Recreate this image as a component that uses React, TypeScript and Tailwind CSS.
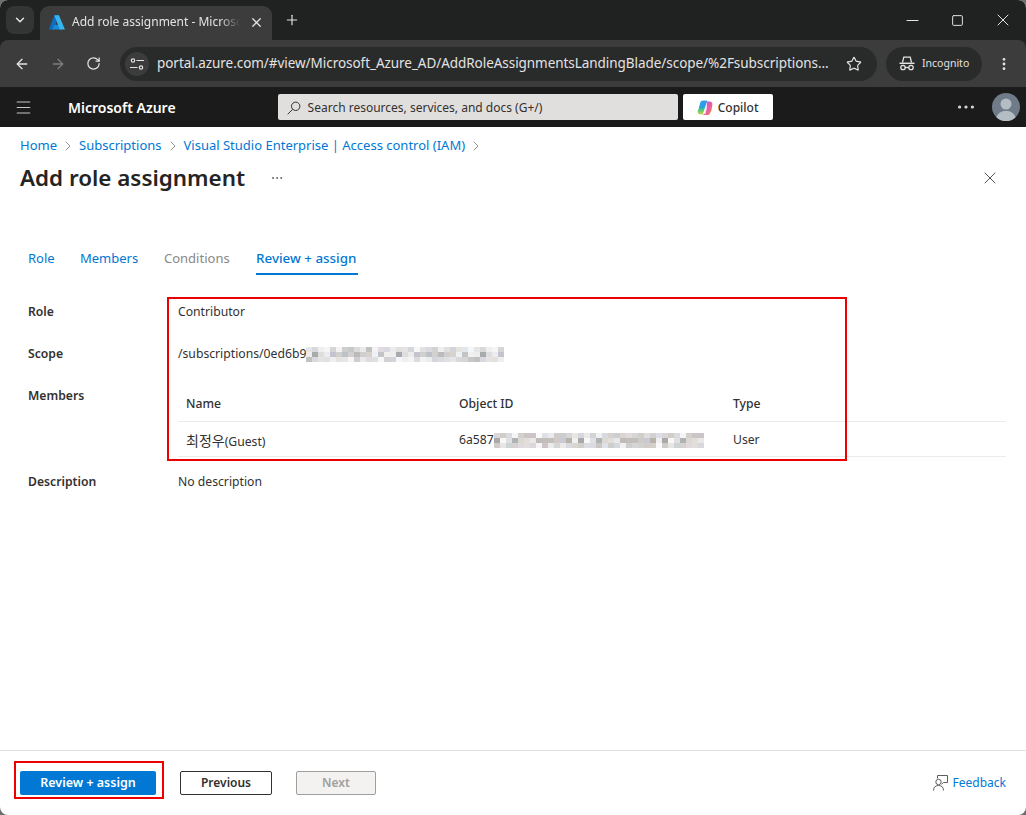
import React from 'react';
import { ArrowLeft, ArrowRight, ChevronDown, ChevronRight, Ellipsis, EllipsisVertical, Menu, Minus, Plus, RotateCw, Square, Star, X } from 'lucide-react';

const FONT = 'font-["Noto_Sans","Noto_Sans_CJK_KR",sans-serif]';

// pixelated (redacted) ids
const SCOPE_BLUR = ['#d8d8da','#c4c3c6','#e6e6e6','#f0f0f0','#c0bec0','#efeded','#b0b3b6','#a8abab','#c8c8c8','#dedede','#a0a0a0','#ececec','#cfc8d4','#c6c3d0','#e0e3e3','#cfcfcf','#dcd4d4','#bcc2c8','#f2f2f2','#d2cfcf','#c8c8ce','#bcbaba','#e6e6e6','#cfcfcf','#bcbcc6','#d8d2cc','#d4dae0','#eef2f6'];
const OBJECT_BLUR = ['#c4c2c4','#b8b2aa','#c6c6ce','#f0f0f0','#bcb6b0','#aca8a8','#b2a4ae','#f8f8f8','#ced0dc','#e0e0e4','#b8b0b0','#b0b3b3','#c0c0c0','#dcd8d2','#bec4ce','#e2dfda','#b6bec0','#e8e8e8','#c2c8ce','#c0baba','#b6b4b4','#c4beb8','#d0c6ce','#c2bfbf','#b6b6b0','#d0cbc6','#bababa','#cacad6'];

function Blur({ cells, count }: { cells: string[]; count: number }) {
  return (
    <span className="inline-flex flex-col">
      {[0, 1, 2].map(row => (
        <span key={row} className="flex">
          {Array.from({ length: count }, (_, i) => (
            <span
              key={i}
              className="h-[5px] w-[6px]"
              style={{ backgroundColor: cells[(i * (row + 1) + row * 5) % cells.length], opacity: row === 1 ? 1 : 0.65 }}
            />
          ))}
        </span>
      ))}
    </span>
  );
}

function AzureLogo() {
  return (
    <svg width="16" height="15" viewBox="0 0 16 15">
      <path d="M5.3 0.3h4.4L5 14.4H.5a.4.4 0 0 1-.4-.5z" fill="#0a6fc2" />
      <path d="M11.9 9.8H5.2l-2 4.6h9.9z" fill="#1a8ad8" />
      <path d="M5.3 0.3h4.6l5.9 13.6a.4.4 0 0 1-.4.5h-4.6z" fill="#37b4ee" />
    </svg>
  );
}

function CopilotLogo() {
  return (
    <svg width="16" height="16" viewBox="0 0 16 16">
      <defs>
        <linearGradient id="cpa" x1="0" y1="0" x2="0" y2="1">
          <stop offset="0" stopColor="#1f9fe8" />
          <stop offset="0.6" stopColor="#35c48c" />
          <stop offset="1" stopColor="#d8d048" />
        </linearGradient>
        <linearGradient id="cpb" x1="0" y1="0" x2="1" y2="1">
          <stop offset="0" stopColor="#9a5ce8" />
          <stop offset="0.6" stopColor="#ee5f9a" />
          <stop offset="1" stopColor="#f58a3c" />
        </linearGradient>
      </defs>
      <path d="M5.500.800h4.700L6.800 12.500c-.4 1.300-1.300 2-2.500 2H3.500C1.500 14.500.300 13 .600 11z" fill="url(#cpa)" />
      <path d="M5.500.800h4.700L7.500 8H1.800l1.400-5c.3-1.400 1-2.200 2.300-2.200z" fill="#2a9fe6" />
      <path d="M9.700 1.500h2.800c2 0 3.200 1.500 2.900 3.500l-1 5.500-1.500 3c-.5 1-1.300 1.500-2.500 1.500H5.600c1.200-.4 1.900-1.200 2.200-2.400z" fill="url(#cpb)" />
      <path d="M6.200 12.800 8.600 6l.6-1.700 1-2.800-.5 7.500-1.500 5.500z" fill="#ffffff" opacity="0.85" />
    </svg>
  );
}

function IncognitoIcon() {
  return (
    <svg width="16" height="15" viewBox="0 0 16 15" fill="none" stroke="#e3e3e3" strokeWidth="1.300">
      <path d="M3.500 6.500 4.800 1.200h6.400l1.300 5.300" />
      <path d="M.5 7.300h15" strokeWidth="1.500" />
      <circle cx="4" cy="11.500" r="2.200" />
      <circle cx="12" cy="11.500" r="2.200" />
      <path d="M6.200 11.500h3.600" />
    </svg>
  );
}

function TuneIcon() {
  return (
    <svg width="14" height="12" viewBox="0 0 14 12" fill="none" stroke="#e3e3e3" strokeWidth="1.200">
      <circle cx="3" cy="2.500" r="1.700" />
      <path d="M6.500 2.500H14" />
      <circle cx="11" cy="9.500" r="1.700" />
      <path d="M0 9.500h7.500" />
    </svg>
  );
}

function SearchIcon() {
  return (
    <svg width="14" height="14" viewBox="0 0 14 14" fill="none" stroke="#323130" strokeWidth="1">
      <circle cx="8.700" cy="5.300" r="4.200" />
      <path d="M5.700 8.300.7 13.300" />
    </svg>
  );
}

function Avatar() {
  return (
    <svg width="28" height="28" viewBox="0 0 28 28">
      <circle cx="14" cy="14" r="14" fill="#6f7b88" />
      <circle cx="14" cy="11" r="5.500" fill="#b4bcc4" />
      <path d="M4.500 24.500c1.500-5 5-6.500 9.500-6.500s8 1.500 9.500 6.500A14 14 0 0 1 4.500 24.500z" fill="#b4bcc4" />
    </svg>
  );
}

function FeedbackIcon() {
  return (
    <svg width="16" height="16" viewBox="0 0 16 16" fill="none" stroke="#605e5c" strokeWidth="1">
      <path d="M4.500 3.500V.5h10v7h-4l-2 1.800" />
      <circle cx="5.500" cy="7" r="2.700" />
      <path d="M.5 15.500c0-3.300 2-5 5-5s5 1.700 5 5" />
    </svg>
  );
}

function Crumb({ label }: { label: string }) {
  return (
    <>
      <span className="text-[#0078d4]">{label}</span>
      <ChevronRight className="mx-[3px] h-[16px] w-[16px] text-[#605e5c]" strokeWidth={1} />
    </>
  );
}

function BrowserChrome() {
  return (
    <div className="bg-[#202121] text-[#e3e3e3]">
      <div className="flex h-[40px] items-end pl-[6px]">
        <div className="mb-[6px] flex h-[28px] w-[28px] items-center justify-center rounded-[8px] bg-[#333434]">
          <ChevronDown className="h-[14px] w-[14px]" strokeWidth={2.5} />
        </div>
        <div className="ml-[6px] flex h-[34px] w-[232px] items-center rounded-t-[9px] bg-[#3c3c3c] pb-[2px] pl-[9px] pr-[8px]">
          <AzureLogo />
          <span className="ml-[7px] h-[18px] w-[168px] overflow-hidden whitespace-nowrap text-[12px] leading-[18px] [mask-image:linear-gradient(to_right,#000_88%,transparent)]">
            Add role assignment - Microsoft Azure
          </span>
          <X className="ml-auto h-[15px] w-[15px]" strokeWidth={2} />
        </div>
        <Plus className="mb-[12px] ml-[12px] h-[16px] w-[16px]" strokeWidth={1.75} />
        <div className="mb-[10px] ml-auto flex items-center">
          <Minus className="h-[19px] w-[19px]" strokeWidth={1.3} />
          <Square className="ml-[29px] h-[13px] w-[13px]" strokeWidth={1.8} />
          <X className="ml-[29px] mr-[13px] h-[20px] w-[20px]" strokeWidth={1.2} />
        </div>
      </div>
      <div className="flex h-[47px] items-center rounded-t-[8px] bg-[#3c3c3c] pl-[14px] pr-[14px]">
        <ArrowLeft className="h-[16px] w-[16px]" strokeWidth={2} />
        <ArrowRight className="ml-[20px] h-[16px] w-[16px] text-[#7d7d7d]" strokeWidth={2} />
        <RotateCw className="ml-[20px] h-[15px] w-[15px]" strokeWidth={2} />
        <div className="ml-[19px] flex h-[34px] w-[757px] items-center rounded-full bg-[#292a2a] pl-[5px] pr-[15px]">
          <span className="flex h-[24px] w-[24px] items-center justify-center rounded-full bg-[#3c3c3c]">
            <TuneIcon />
          </span>
          <span className="ml-[8px] whitespace-nowrap text-[13.5px] tracking-[-0.05px]">
            portal.azure.com/#view/Microsoft_Azure_AD/AddRoleAssignmentsLandingBlade/scope/%2Fsubscriptions...
          </span>
          <Star className="ml-auto h-[16px] w-[16px] shrink-0" strokeWidth={1.75} />
        </div>
        <div className="ml-[9px] flex h-[34px] w-[96px] items-center rounded-full bg-[#292a2a] pl-[13px]">
          <IncognitoIcon />
          <span className="ml-[7px] text-[10.5px]">Incognito</span>
        </div>
        <EllipsisVertical className="ml-[14px] h-[16px] w-[16px]" strokeWidth={2.25} />
      </div>
    </div>
  );
}

function AzureHeader() {
  return (
    <div className="flex h-[40px] items-center bg-[#1b1b1b] pl-[14px] pr-[6px] text-white">
      <Menu className="h-[19px] w-[19px] text-[#c8c6c4]" strokeWidth={1.3} />
      <span className="ml-[35px] text-[14px] font-semibold">Microsoft Azure</span>
      <div className="ml-[102px] flex h-[26px] w-[400px] items-center rounded-[2px] bg-[#e1dfdd] pl-[9px] pt-[1px] text-[12px] text-[#323130]">
        <SearchIcon />
        <span className="ml-[7px]">Search resources, services, and docs (G+/)</span>
      </div>
      <div className="ml-[5px] flex h-[26px] w-[90px] items-center justify-center gap-[5px] rounded-[2px] bg-white pt-[1px] text-[12px] font-medium text-[#323130]">
        <CopilotLogo />
        Copilot
      </div>
      <Ellipsis className="ml-auto h-[22px] w-[22px] text-[#e1dfdd]" strokeWidth={1.5} />
      <span className="ml-[15px]"><Avatar /></span>
    </div>
  );
}

export default function App() {
  return (
    <div className="h-[815px] w-[1026px] bg-[#6e6e6e]">
      <div className={`flex h-[815px] w-[1026px] flex-col overflow-hidden rounded-[8px] bg-white text-[#323130] ${FONT}`}>
        <BrowserChrome />
        <AzureHeader />

        <div className="flex h-[36px] items-center pl-[20px] pt-[2px] text-[13px]">
          <Crumb label="Home" />
          <Crumb label="Subscriptions" />
          <Crumb label="Visual Studio Enterprise | Access control (IAM)" />
        </div>

        <div className="flex h-[30px] items-center pl-[20px] pr-[26px]">
          <h1 className="text-[22.4px] font-semibold text-[#252423]">Add role assignment</h1>
          <Ellipsis className="ml-[25px] h-[14px] w-[14px] text-[#605e5c]" strokeWidth={1.5} />
          <X className="ml-auto h-[20px] w-[20px] text-[#323130]" strokeWidth={1} />
        </div>

        <div className="mt-[49px] flex h-[33px] pl-[28px] text-[13px]">
          <span className="w-[52px] pt-[7px] text-[#0078d4]">Role</span>
          <span className="w-[84px] pt-[7px] text-[#0078d4]">Members</span>
          <span className="w-[92px] pt-[7px] text-[#8a8886]">Conditions</span>
          <span className="h-[33px] w-[102px] whitespace-nowrap border-b-2 border-[#0078d4] pt-[6px] text-[13.4px] font-medium text-[#0078d4]">Review + assign</span>
        </div>

        <div className="relative mt-[15px] flex-1 pl-[28px] pr-[20px] pt-[1px] text-[12.2px]">
          <div className="flex h-[42px] items-center">
            <span className="w-[150px] font-semibold">Role</span>
            <span>Contributor</span>
          </div>
          <div className="flex h-[42px] items-center">
            <span className="w-[150px] font-semibold">Scope</span>
            <span>/subscriptions/0ed6b9</span>
            <Blur cells={SCOPE_BLUR} count={33} />
          </div>
          <div className="flex">
            <span className="w-[150px] pt-[3px] leading-[36px] font-semibold">Members</span>
            <div className="flex-1 pt-[11px]">
              <div className="grid h-[36px] grid-cols-[273px_274px_1fr] items-center border-b border-[#edebe9] pl-[8px] pt-[1px] font-medium">
                <span>Name</span>
                <span>Object ID</span>
                <span>Type</span>
              </div>
              <div className="grid h-[35px] grid-cols-[273px_274px_1fr] items-center border-b border-[#edebe9] pl-[8px] pt-[3px]">
                <span><span className="text-[14px]">최정우</span>(Guest)</span>
                <span className="flex items-center">
                  6a587
                  <Blur cells={OBJECT_BLUR} count={35} />
                </span>
                <span>User</span>
              </div>
            </div>
          </div>
          <div className="mt-[4px] flex h-[42px] items-center">
            <span className="w-[150px] font-semibold">Description</span>
            <span>No description</span>
          </div>

          {/* red annotation box */}
          <div className="absolute left-[167px] top-[7px] h-[164px] w-[680px] border-2 border-[#ee0000]" />
        </div>

        <div className="flex h-[65px] items-center border-t border-[#e1dfdd] pl-[20px] pr-[20px] text-[12px] font-semibold">
          <div className="relative">
            <button className="h-[24px] w-[136px] rounded-[2px] bg-[#0078d4] text-[12.5px] text-white">Review + assign</button>
            <div className="absolute -left-[6px] -top-[10px] h-[38px] w-[150px] border-2 border-[#ee0000]" />
          </div>
          <button className="ml-[24px] h-[24px] w-[92px] rounded-[2px] border border-[#323130] text-[#323130]">Previous</button>
          <button className="ml-[24px] h-[24px] w-[80px] rounded-[2px] border border-[#a19f9d] bg-[#f3f2f1] text-[#a19f9d]">Next</button>
          <div className="ml-auto flex items-center gap-[4px] font-normal text-[#0078d4]">
            <FeedbackIcon />
            Feedback
          </div>
        </div>
      </div>
    </div>
  );
}
